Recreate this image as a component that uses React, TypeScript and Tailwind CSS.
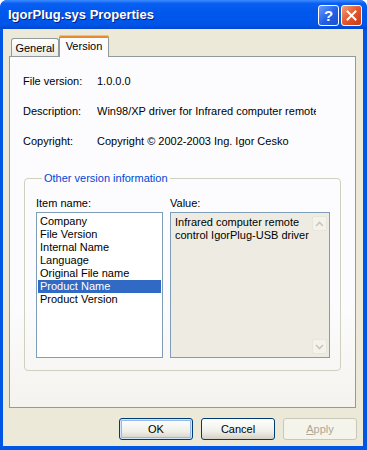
import React from 'react';

const items = [
  'Company',
  'File Version',
  'Internal Name',
  'Language',
  'Original File name',
  'Product Name',
  'Product Version',
];

const info = [
  { label: 'File version:', value: '1.0.0.0' },
  { label: 'Description:', value: 'Win98/XP driver for Infrared computer remote' },
  { label: 'Copyright:', value: 'Copyright \u00a9 2002-2003 Ing. Igor Cesko' },
];

const XpButton: React.FC<{ label: React.ReactNode; primary?: boolean; disabled?: boolean }> = ({
  label,
  primary,
  disabled,
}) => (
  <button
    className={`w-[74px] h-[22px] rounded-[3px] border text-[11px] flex items-center justify-center ${
      disabled
        ? 'border-[#C9C7BA] bg-[#F5F4EA] text-[#ACA899]'
        : 'border-[#003C74] bg-[linear-gradient(to_bottom,#FFFFFF,#F0F0EA_60%,#D6D0C5)] text-black'
    } ${primary ? 'shadow-[inset_0_0_0_1px_#CEE7FF,inset_0_0_0_2px_#98B8EA]' : ''}`}
  >
    {label}
  </button>
);

export default function App() {
  return (
    <div className="w-[367px] h-[450px] flex flex-col rounded-t-[7px] bg-[#0055E5] font-['Liberation_Sans',Arial,sans-serif] text-[11px] text-black overflow-hidden">
      {/* title bar */}
      <div className="h-[29px] shrink-0 flex items-center pl-[8px] pr-[5px] rounded-t-[7px] bg-[linear-gradient(to_bottom,#3B8CFF_0%,#0A5FF2_12%,#0058EE_40%,#0055E8_85%,#0046D0_100%)]">
        <span className="flex-1 text-white font-bold text-[13px] [text-shadow:1px_1px_0_#0A1F7A]">
          IgorPlug.sys Properties
        </span>
        <div className="flex gap-[2px] mt-[2px]">
          <div className="w-[21px] h-[21px] rounded-[3px] border border-white bg-[linear-gradient(135deg,#6A9BFF,#2160E6_55%,#1A4FD0)] flex items-center justify-center text-white font-bold text-[15px] leading-none">
            ?
          </div>
          <div className="w-[21px] h-[21px] rounded-[3px] border border-white bg-[linear-gradient(135deg,#F0A07A,#E2572C_50%,#C73D14)] flex items-center justify-center">
            <svg width="11" height="11" viewBox="0 0 11 11">
              <path d="M1.5 1.5 L9.5 9.5 M9.5 1.5 L1.5 9.5" stroke="white" strokeWidth="2" strokeLinecap="square" />
            </svg>
          </div>
        </div>
      </div>

      {/* body */}
      <div className="flex-1 ml-[3px] mr-[4px] mb-[4px] bg-[#ECE9D8] flex flex-col">
        {/* tabs */}
        <div className="h-[27px] flex items-end pl-[8px] pt-[6px]">
          <div className="h-[18px] w-[48px] border border-b-0 border-[#919B9C] rounded-t-[3px] bg-[linear-gradient(to_bottom,#FFFFFF,#ECEBE6)] flex items-center justify-center pt-[1px]">
            General
          </div>
          <div className="h-[22px] w-[50px] -mb-px relative z-10 border border-b-0 border-[#919B9C] rounded-t-[3px] bg-[#FCFCFE] flex flex-col">
            <div className="h-[3px] -mx-px -mt-px rounded-t-[3px] bg-[#E68B2C] border-t border-[#FFC73C]" />
            <div className="flex-1 flex items-center justify-center pb-[3px]">Version</div>
          </div>
        </div>

        {/* panel */}
        <div className="ml-[6px] w-[347px] h-[352px] border border-[#919B9C] bg-[linear-gradient(to_bottom,#FCFCFE_70%,#F4F3EE)] pl-[13px] pt-[18px] flex flex-col">
          {info.map((row) => (
            <div key={row.label} className="flex h-[13px] leading-[13px] mb-[17px] whitespace-nowrap">
              <span className="w-[74px] shrink-0">{row.label}</span>
              <span className="w-[219px] overflow-hidden text-clip">{row.value}</span>
            </div>
          ))}

          <fieldset className="mt-[7px] ml-[1px] w-[317px] h-[199px] border border-[#D0D0BF] rounded-[4px] pl-[11px] pt-[12px]">
            <legend className="ml-[6px] px-[2px] text-[#0046D5] leading-[13px]">Other version information</legend>
            <div className="flex gap-[7px]">
              <div className="flex flex-col">
                <div className="h-[13px] leading-[13px] mb-[2px]">Item name:</div>
                <div className="w-[127px] h-[146px] border border-[#7F9DB9] bg-white pt-[2px] px-[1px]">
                  {items.map((it) => (
                    <div
                      key={it}
                      className={`h-[13px] leading-[13px] pl-[2px] whitespace-nowrap ${
                        it === 'Product Name' ? 'bg-[#316AC5] text-white' : ''
                      }`}
                    >
                      {it}
                    </div>
                  ))}
                </div>
              </div>
              <div className="flex flex-col">
                <div className="h-[13px] leading-[13px] mb-[2px]">Value:</div>
                <div className="w-[160px] h-[146px] border border-[#7F9DB9] bg-[#EEECE2] flex">
                  <div className="flex-1 pl-[4px] pt-[3px] leading-[13px]">
                    Infrared computer remote
                    <br />
                    control IgorPlug-USB driver
                  </div>
                  <div className="w-[17px] flex flex-col justify-between py-[3px] pr-[1px]">
                    <div className="w-[15px] h-[15px] rounded-[2px] border border-[#E8E6DC] bg-[#F3F2EB] flex items-center justify-center">
                      <svg width="9" height="6" viewBox="0 0 9 6">
                        <path d="M1 5 L4.5 1.5 L8 5" stroke="#C8C6BC" strokeWidth="1.6" fill="none" />
                      </svg>
                    </div>
                    <div className="w-[15px] h-[15px] rounded-[2px] border border-[#E8E6DC] bg-[#F3F2EB] flex items-center justify-center">
                      <svg width="9" height="6" viewBox="0 0 9 6">
                        <path d="M1 1 L4.5 4.5 L8 1" stroke="#C8C6BC" strokeWidth="1.6" fill="none" />
                      </svg>
                    </div>
                  </div>
                </div>
              </div>
            </div>
          </fieldset>
        </div>

        {/* buttons */}
        <div className="flex justify-end gap-[8px] mt-[10px] pr-[6px]">
          <XpButton label="OK" primary />
          <XpButton label="Cancel" />
          <XpButton
            label={
              <span>
                <span className="underline">A</span>pply
              </span>
            }
            disabled
          />
        </div>
      </div>
    </div>
  );
}
